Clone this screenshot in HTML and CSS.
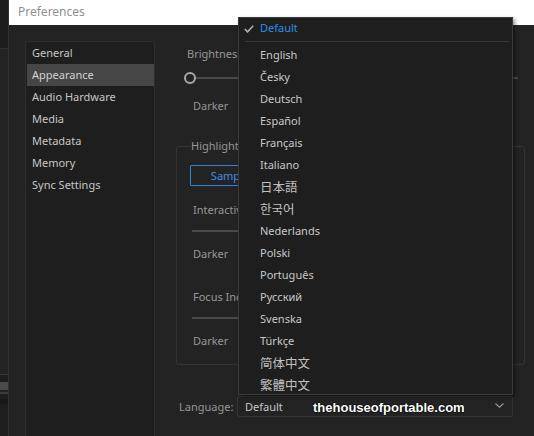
FILE: index.html
```html
<!DOCTYPE html>
<html lang="en">
<head>
    <meta charset="UTF-8">
    <meta name="viewport" content="width=device-width, initial-scale=1.0">
    <title>Preferences</title>
    <link rel="stylesheet" href="styles.css">
</head>
<body>
    <div class="app">
        <!-- Edge of the window behind the dialog -->
        <div class="strip">
            <div class="strip-top"></div>
            <div class="strip-fill"></div>
            <div class="strip-bar"></div>
            <div class="strip-dark"></div>
        </div>

        <div class="dialog">
            <div class="titlebar">Preferences</div>
            <div class="content">
                <ul class="sidebar">
                    <li>General</li>
                    <li class="selected">Appearance</li>
                    <li>Audio Hardware</li>
                    <li>Media</li>
                    <li>Metadata</li>
                    <li>Memory</li>
                    <li>Sync Settings</li>
                </ul>

                <div class="main">
                    <div class="label brightness">Brightness</div>
                    <div class="slider">
                        <span class="knob"></span>
                        <span class="track"></span>
                    </div>
                    <div class="label darker">Darker</div>

                    <fieldset class="group">
                        <legend>Highlight Color</legend>
                        <button class="sample">Sample</button>
                        <div class="label sub first">Interactive Controls</div>
                        <div class="line"></div>
                        <div class="label sub dk">Darker</div>
                        <div class="label sub second">Focus Indicators</div>
                        <div class="line"></div>
                        <div class="label sub dk">Darker</div>
                    </fieldset>

                    <div class="language">
                        <span class="lang-label">Language:</span>
                        <div class="select">
                            <span>Default</span>
                            <svg class="chevron" width="9" height="5" viewBox="0 0 9 5">
                                <path d="M0.5 0.5 L4.5 4.2 L8.5 0.5" fill="none" stroke="#9a9a9a" stroke-width="1.1"/>
                            </svg>
                        </div>
                    </div>
                </div>
            </div>
        </div>
    </div>

    <!-- Open language menu -->
    <ul class="menu">
        <li class="current">
            <svg class="check" width="10" height="8" viewBox="0 0 10 8">
                <path d="M0.8 4 L3.6 6.8 L9.2 0.8" fill="none" stroke="#b4b4b4" stroke-width="1.5"/>
            </svg>
            Default
        </li>
        <li class="sep"></li>
        <li>English</li>
        <li>Česky</li>
        <li>Deutsch</li>
        <li>Español</li>
        <li>Français</li>
        <li>Italiano</li>
        <li class="cjk">日本語</li>
        <li class="cjk">한국어</li>
        <li>Nederlands</li>
        <li>Polski</li>
        <li>Português</li>
        <li>Русский</li>
        <li>Svenska</li>
        <li>Türkçe</li>
        <li class="cjk">简体中文</li>
        <li class="cjk">繁體中文</li>
    </ul>

    <div class="watermark">thehouseofportable.com</div>
</body>
</html>
```

FILE: styles.css
```css
body {
    margin: 0;
    width: 534px;
    height: 436px;
    overflow: hidden;
    background-color: #1e1e1e;
    font-family: "Noto Sans", "Open Sans", sans-serif;
    font-size: 11px;
    color: #c6c6c6;
}

.app {
    display: flex;
    height: 436px;
}

/* left window edge */
.strip {
    width: 8px;
    border-right: 1px solid #323232;
    display: flex;
    flex-direction: column;
}

.strip-top {
    height: 48px;
    background-color: #1d1d1d;
    border-bottom: 1px solid #303030;
}

.strip-fill {
    flex: 1;
    background-color: #232323;
    border-bottom: 1px solid #3a3a3a;
}

.strip-bar {
    height: 8px;
    margin-top: 7px;
    background-color: #4a4a4a;
    border-bottom: 2px solid #232323;
    box-shadow: 0 2px 0 #3c3c3c;
}

.strip-dark {
    height: 5px;
    margin: 7px 0 32px;
    background-color: #191919;
}

.dialog {
    flex: 1;
    display: flex;
    flex-direction: column;
    background-color: #232323;
}

.titlebar {
    height: 25px;
    line-height: 24px;
    background-color: #ffffff;
    color: #8f8f8f;
    font-size: 12px;
    padding-left: 9px;
}

.content {
    flex: 1;
    display: flex;
    padding: 16px 0 0 16px;
}

/* category list */
.sidebar {
    list-style: none;
    margin: 0;
    padding: 0;
    width: 128px;
    background-color: #1e1e1e;
    border: 1px solid #2f2f2f;
    border-bottom: none;
    border-radius: 3px 3px 0 0;
}

.sidebar li {
    height: 22px;
    line-height: 22px;
    padding-left: 5px;
    margin-left: 1px;
}

.sidebar li.selected {
    background-color: #464646;
    color: #d2d2d2;
}

.main {
    flex: 1;
    padding: 0 9px 0 21px;
    display: flex;
    flex-direction: column;
}

.label {
    color: #969696;
    line-height: 14px;
    white-space: nowrap;
}

.brightness {
    margin: 6px 0 0 11px;
}

.slider {
    display: flex;
    align-items: center;
    margin: 11px 7px 0 8px;
}

.knob {
    width: 8px;
    height: 8px;
    border: 2px solid #a8a8a8;
    border-radius: 50%;
}

.track {
    flex: 1;
    height: 2px;
    background-color: #4a4a4a;
}

.darker {
    margin: 15px 0 0 17px;
}

/* highlight colour group */
.group {
    margin: 26px 0 0;
    padding: 0 0 16px 13px;
    border: 1px solid #343434;
    border-radius: 3px;
    min-width: 0;
}

.group legend {
    color: #969696;
    line-height: 14px;
    padding: 0;
    margin-left: 1px;
}

.sample {
    display: block;
    width: 80px;
    height: 21px;
    margin-top: 12px;
    background: transparent;
    border: 1px solid #2d83e0;
    border-radius: 1px;
    color: #3b8fe8;
    font-family: inherit;
    font-size: 11px;
    padding: 0;
}

.sub {
    margin-left: 3px;
}

.first {
    margin-top: 17px;
}

.second {
    margin-top: 29px;
}

.line {
    height: 2px;
    background-color: #4a4a4a;
    margin: 13px 40px 0 2px;
}

.dk {
    margin-top: 15px;
}

/* language row */
.language {
    display: flex;
    align-items: center;
    margin: 31px 0 0 3px;
}

.lang-label {
    color: #969696;
    width: 58px;
}

.select {
    flex: 1;
    height: 19px;
    display: flex;
    align-items: center;
    justify-content: space-between;
    border: 1px solid #343434;
    border-radius: 2px;
    padding: 0 8px 0 7px;
    margin-right: 12px;
}

.chevron {
    margin-bottom: 2px;
}

/* dropdown menu overlay */
.menu {
    position: absolute;
    left: 238px;
    top: 17px;
    width: 273px;
    height: 376px;
    margin: 0;
    padding: 0;
    list-style: none;
    background-color: #1e1e1e;
    border: 1px solid #3a3a3a;
    box-shadow: 2px 2px 4px rgba(0, 0, 0, 0.45);
}

.menu li {
    height: 22px;
    line-height: 22px;
    padding-left: 21px;
    color: #c8c8c8;
}

.menu li.current {
    position: relative;
    height: 20px;
    line-height: 20px;
    color: #2d8ceb;
}

.check {
    position: absolute;
    left: 5px;
    top: 7px;
}

.menu li.sep {
    height: 1px;
    padding: 0;
    margin: 3px 3px 2px 6px;
    background-color: #3a3a3a;
}

.menu li.cjk {
    font-family: "Noto Sans CJK JP", "Noto Sans CJK KR", sans-serif;
    font-size: 12.5px;
    color: #c0c0c0;
}

.watermark {
    position: absolute;
    left: 313px;
    top: 400px;
    font-family: "Liberation Sans", Arial, sans-serif;
    font-weight: bold;
    font-size: 13px;
    color: #ffffff;
    text-shadow: 0 0 2px #000, 0 0 1px #000;
}
```
